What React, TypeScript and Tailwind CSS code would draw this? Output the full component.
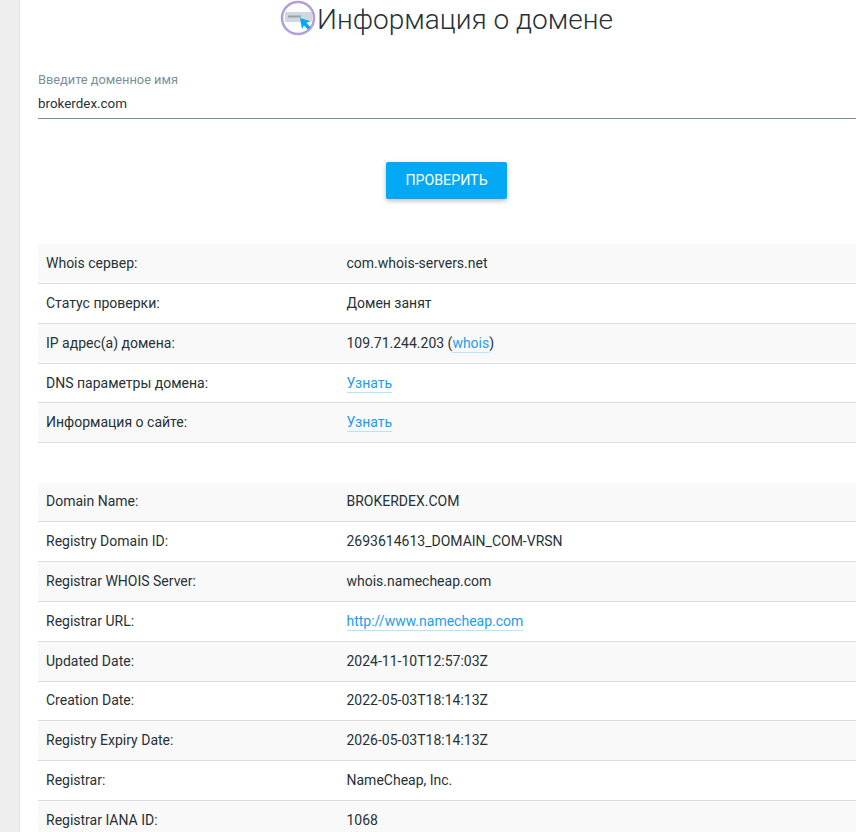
import React from "react";

const Link = ({ children }: { children: React.ReactNode }) => (
  <a className="text-[#1c9cf0] border-b border-[#b3e5fc] pb-px">{children}</a>
);

const first: [string, React.ReactNode][] = [
  ["Whois сервер:", "com.whois-servers.net"],
  ["Статус проверки:", "Домен занят"],
  ["IP адрес(а) домена:", <>109.71.244.203 (<Link>whois</Link>)</>],
  ["DNS параметры домена:", <Link>Узнать</Link>],
  ["Информация о сайте:", <Link>Узнать</Link>],
];
const second: [string, React.ReactNode][] = [
  ["Domain Name:", "BROKERDEX.COM"],
  ["Registry Domain ID:", "2693614613_DOMAIN_COM-VRSN"],
  ["Registrar WHOIS Server:", "whois.namecheap.com"],
  ["Registrar URL:", <Link>http://www.namecheap.com</Link>],
  ["Updated Date:", "2024-11-10T12:57:03Z"],
  ["Creation Date:", "2022-05-03T18:14:13Z"],
  ["Registry Expiry Date:", "2026-05-03T18:14:13Z"],
  ["Registrar:", "NameCheap, Inc."],
  ["Registrar IANA ID:", "1068"],
];

function Table({ rows }: { rows: [string, React.ReactNode][] }) {
  return (
    <div className="flex flex-col">
      {rows.map(([k, v], i) => (
        <div
          key={i}
          className={`flex items-center h-[39.8px] shrink-0 border-b border-[#dddddd] pl-2 ${i % 2 === 0 ? "bg-[#f9f9f9]" : "bg-white"}`}
        >
          <div className="w-[300.5px] shrink-0">{k}</div>
          <div>{v}</div>
        </div>
      ))}
    </div>
  );
}

export default function App() {
  return (
    <div className="h-[832px] overflow-hidden flex bg-white text-[#263238] text-[14px] font-['Roboto',sans-serif]">
      <div className="w-[20px] shrink-0 bg-[#eeeeee] border-r border-[#e4e4e4]" />
      <div className="w-[818px] ml-[18px] shrink-0">
        <div className="flex items-center justify-center h-[40px] ml-[-1px]">
          <svg width="36" height="36" viewBox="0 0 36 36" className="mr-[1px] -mt-[4px]">
            <circle cx="18" cy="18" r="16" fill="#fff" stroke="#b39ddb" strokeWidth="2.5" />
            <rect x="5" y="12" width="27" height="10" rx="1" fill="#cfd8dc" />
            <rect x="8" y="15.5" width="13" height="2" fill="#90a4ae" />
            <path d="M20 18l10 3-3.5 2 4 4-2.5 2.5-4-4-2 3.5z" fill="#03a9f4" />
          </svg>
          <h1 className="text-[28px] font-light leading-none text-[#263238]">Информация о домене</h1>
        </div>
        <div className="mt-[31px] text-[12.8px] leading-[18px] text-[#78909c]">Введите доменное имя</div>
        <div className="mt-[5px] h-[25px] border-b border-[#78909c] text-[13.4px] leading-[19px]">brokerdex.com</div>
        <div className="flex justify-center mt-[43px]">
          <button className="w-[121px] h-[37px] -ml-[2px] pl-px rounded-[2px] bg-[#03a9f4] text-white text-[14.2px] shadow-[0_2px_5px_rgba(0,0,0,0.26)]">
            ПРОВЕРИТЬ
          </button>
        </div>
        <div className="mt-[45.3px]">
          <Table rows={first} />
        </div>
        <div className="mt-[39.3px]">
          <Table rows={second} />
        </div>
      </div>
    </div>
  );
}
